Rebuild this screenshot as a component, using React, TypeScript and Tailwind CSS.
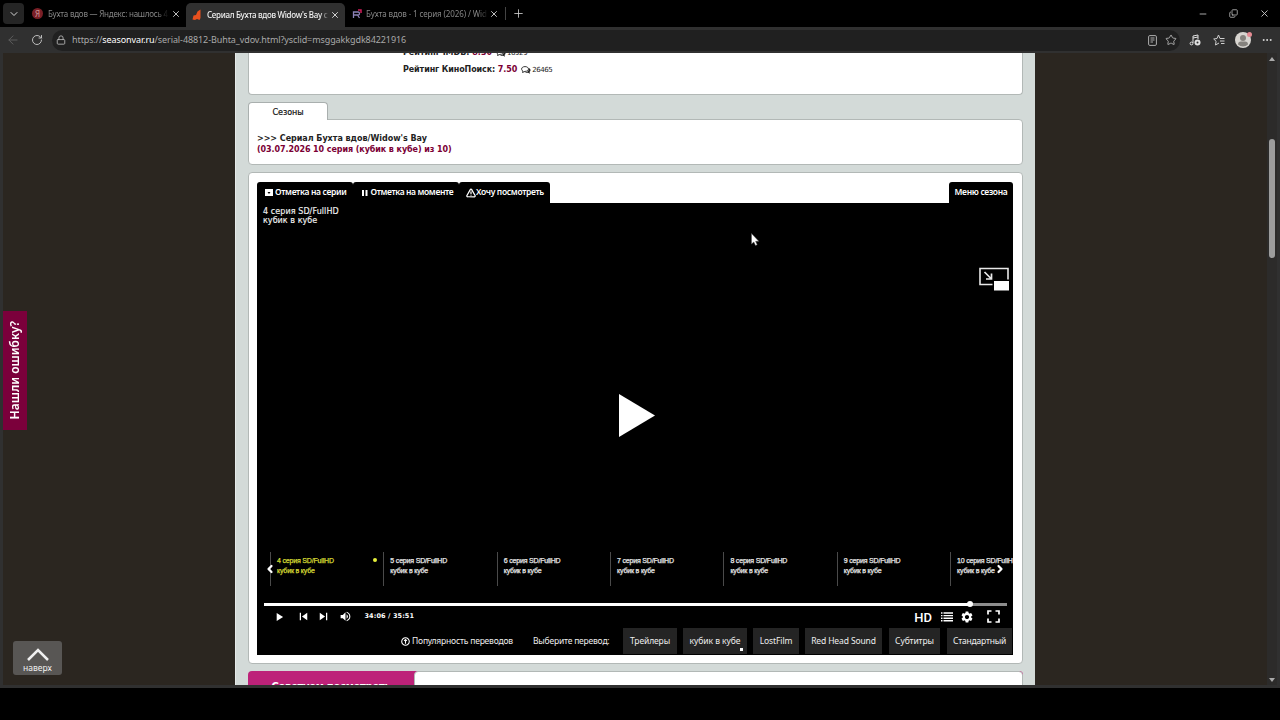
import React from 'react';
import {
    ArrowLeft, ChevronDown, ChevronLeft, ChevronRight, Copy,
    Lock, Minus, MoreHorizontal, Plus, RotateCw, Star, TriangleAlert, X,
} from 'lucide-react';
import { MdFullscreen, MdPlayArrow, MdSettings, MdSkipNext, MdSkipPrevious, MdVolumeUp } from 'react-icons/md';

const EPISODES = [4, 5, 6, 7, 8, 9, 10];

const TRANSLATIONS = [
    { name: 'Трейлеры', box: 'w-[54px] ml-[13px]', text: 'tracking-[-0.1px]' },
    { name: 'кубик в кубе', box: 'w-[64px] ml-[6px]', text: 'tracking-[-0.05px]', active: true },
    { name: 'LostFilm', box: 'w-[46px] ml-[6px]', text: 'tracking-[-0.1px]' },
    { name: 'Red Head Sound', box: 'w-[77px] ml-[6px]', text: 'tracking-[-0.12px]' },
    { name: 'Субтитры', box: 'w-[51px] ml-[7px]', text: 'tracking-[-0.1px]' },
    { name: 'Стандартный', box: 'w-[65px] ml-[7px]', text: 'tracking-[-0.2px]' },
];

const TabStrip: React.FC = () => (
    <div className="flex h-[27px] items-center bg-black text-[8px] text-[#858585]">
        <div className="ml-[3px] flex h-[21px] w-[21px] items-center justify-center rounded-[4px] bg-[#252525]">
            <ChevronDown className="h-[12px] w-[12px] text-[#d5d5d5]" />
        </div>
        <div className="ml-[8px] flex w-[154px] items-center">
            <div className="flex h-[11px] w-[11px] shrink-0 items-center justify-center rounded-full bg-[#7a1f26] text-[8px] text-[#c99]">Я</div>
            <span className="ml-[5px] w-[121px] whitespace-nowrap tracking-[-0.22px] [mask-image:linear-gradient(to_right,black_90%,transparent)]">Бухта вдов — Яндекс: нашлось 4</span>
            <X className="ml-[2px] h-[10px] w-[10px] shrink-0 text-[#e5e5e5]" />
        </div>
        <div className="flex h-[24px] w-[159px] items-center self-end rounded-t-[5px] bg-[#303030] pb-[1px] text-[#f0f0f0]">
            <svg viewBox="0 0 10 12" className="ml-[6px] h-[12px] w-[10px] shrink-0">
                <path d="M.500 10.500 1.500 6.500 4 6l1.500-3.500L8.500.500V9L7.500 11 5 10 3 11Z" fill="#e8501e" />
            </svg>
            <span className="ml-[5px] w-[122px] whitespace-nowrap font-medium tracking-[-0.3px] [mask-image:linear-gradient(to_right,black_93%,transparent)]">Сериал Бухта вдов Widow's Bay с</span>
            <X className="ml-[1px] h-[10px] w-[10px] shrink-0" />
        </div>
        <div className="ml-[7px] flex w-[147px] items-center">
            <svg viewBox="0 0 10 10" className="h-[10px] w-[10px] shrink-0">
                <path d="M1.5 9V3h4.500q1.500 0 1.500 1.500T6 6H2M5.500 6 7.500 9" fill="none" stroke="#8b81b5" strokeWidth="1.300" />
                <path d="M6 1h3v3" fill="none" stroke="#d01d58" strokeWidth="1.500" />
            </svg>
            <span className="ml-[4px] w-[122px] whitespace-nowrap tracking-[-0.12px] [mask-image:linear-gradient(to_right,black_92%,transparent)]">Бухта вдов - 1 серия (2026) / Wid</span>
            <X className="ml-[1px] h-[10px] w-[10px] shrink-0 text-[#e5e5e5]" />
        </div>
        <div className="ml-[6px] h-[13px] w-px bg-[#444]" />
        <Plus strokeWidth={1.5} className="ml-[6px] h-[13px] w-[13px] text-[#d5d5d5]" />
        <div className="ml-auto flex items-center text-[#c9c9c9]">
            <Minus className="h-[10px] w-[10px]" />
            <Copy className="ml-[21px] h-[9px] w-[9px] -scale-x-100 rotate-180" />
            <X className="ml-[21px] mr-[10px] h-[11px] w-[11px]" />
        </div>
    </div>
);

const AddressBar: React.FC = () => (
    <div className="flex h-[26px] items-center bg-[#303030] text-[#bdbdbd]">
        <ArrowLeft strokeWidth={1.7} className="ml-[6px] h-[14px] w-[14px] text-[#5c5c5c]" />
        <RotateCw className="ml-[11px] h-[12px] w-[12px]" />
        <div className="ml-[9px] flex h-[21px] w-[1128px] items-center rounded-full bg-[#202020]">
            <Lock className="ml-[4px] h-[10px] w-[10px]" />
            <span className="ml-[6px] whitespace-nowrap text-[9px] tracking-[-0.09px] text-[#a9a9a9]">
                https://<span className="text-white">seasonvar.ru</span>/serial-48812-Buhta_vdov.html?ysclid=msggakkgdk84221916
            </span>
            <svg viewBox="0 0 9 11" className="ml-auto h-[11px] w-[9px]" fill="none" stroke="currentColor" strokeWidth=".900">
                <rect x=".600" y=".600" width="7.800" height="9.800" rx="1.200" />
                <path d="M2.500 3h4M2.500 5h4M2.500 7h2.500" />
            </svg>
            <Star strokeWidth={1.7} className="ml-[8px] mr-[3px] h-[12px] w-[12px]" />
        </div>
        <svg viewBox="0 0 12 12" className="ml-[9px] h-[12px] w-[12px] text-[#e0e0e0]">
            <path d="M4 9V2l5-1v4M4 4l5-1" fill="none" stroke="currentColor" />
            <circle cx="2.500" cy="9.500" r="1.400" fill="none" stroke="currentColor" />
            <circle cx="8.500" cy="8.500" r="3" fill="currentColor" />
            <circle cx="8.500" cy="8.500" r="1" fill="#303030" />
        </svg>
        <svg viewBox="0 0 12 12" className="ml-[12px] h-[12px] w-[12px]" fill="none" stroke="#d0d0d0" strokeWidth="1">
            <path d="M7 4.500 5.500 1 4 4.500.700 5l2.400 2.300L2.500 11 6 9M7 4.500h4.500M7 7h4.500M8 9.500h3.500" />
        </svg>
        <div className="relative ml-[10px] h-[16px] w-[16px]">
            <svg viewBox="0 0 16 16" className="h-[16px] w-[16px]">
                <circle cx="8" cy="8" r="8" fill="#d8d5d0" />
                <circle cx="8" cy="6" r="3" fill="#85827d" />
                <path d="M3 12.500q0-3 3-3h4q3 0 3 3-2 2-5 2t-5-2Z" fill="#85827d" />
            </svg>
            <div className="absolute right-[-1px] top-0 h-[5px] w-[5px] rounded-full bg-[#e58b93]" />
        </div>
        <MoreHorizontal className="ml-[10px] h-[12px] w-[12px] text-[#e0e0e0]" />
    </div>
);

const Comments: React.FC<{ count: string }> = ({ count }) => (
    <>
        <svg viewBox="0 0 10 8" className="ml-[4px] h-[8px] w-[10px]">
            <path d="M4 .600c2 0 3.500 1 3.500 2.400S6 5.400 4 5.400L1.500 6.500 2 5C1 4.600.600 3.800.600 3 .600 1.600 2 .600 4 .600Z" fill="white" stroke="#222" strokeWidth=".900" />
            <path d="M8 2c2 1 2 3 .500 4l.700 1.800L7 6.800q-2 .200-3-.600 4 0 4-4.200Z" fill="#222" />
        </svg>
        <span className="ml-[1px] text-[7px] font-normal tracking-[-0.43px] text-[#222]">{count}</span>
    </>
);

const Seasons: React.FC = () => (
    <div className="mt-[7px]">
        <div className="relative mb-[-1px] h-[18px] w-[80px] rounded-t-[4px] border border-b-0 border-[#a9afae] bg-white pt-[4px] text-center font-['DejaVu_Sans',sans-serif] text-[8px] leading-[11px] tracking-[-0.02px] text-[#111] [-webkit-text-stroke:0.2px]">Сезоны</div>
        <div className="h-[46px] rounded-[4px] rounded-tl-none border border-[#b2b8b6] bg-white px-[8px] pt-[13px] font-['DejaVu_Sans',sans-serif] text-[8px] font-bold leading-[11px]">
            <div className="tracking-[-0.02px] text-[#222]">&gt;&gt;&gt; Сериал Бухта вдов/Widow's Bay</div>
            <div className="mt-[-0.5px] tracking-[-0.08px] text-[#7b0035]">(03.07.2026 10 серия (кубик в кубе) из 10)</div>
        </div>
    </div>
);

const PlayerTabs: React.FC = () => (
    <div className="flex h-[21px] text-[8.5px] font-semibold tracking-[-0.32px] text-white">
        <div className="flex w-[96px] items-center rounded-t-[3px] bg-black pl-[8px]">
            <svg viewBox="0 0 8 7" className="h-[7px] w-[8px]"><path d="M0 0h8v7H0Z" fill="white" /><path d="m2.500 3 1.500 2 1.500-2Z" fill="black" /></svg>
            <span className="ml-[2px] whitespace-nowrap">Отметка на серии</span>
        </div>
        <div className="flex w-[106px] items-center rounded-t-[3px] bg-black pl-[9px]">
            <svg viewBox="0 0 6 6" className="h-[6px] w-[6px]"><path d="M0 0h2v6H0ZM3.500 0h2v6h-2Z" fill="white" /></svg>
            <span className="ml-[2.5px] whitespace-nowrap tracking-[-0.37px]">Отметка на моменте</span>
        </div>
        <div className="flex w-[91px] items-center rounded-t-[3px] bg-black pl-[7px]">
            <TriangleAlert strokeWidth={3} className="h-[10px] w-[10px]" />
            <span className="whitespace-nowrap">Хочу посмотреть</span>
        </div>
        <div className="ml-auto flex w-[64px] items-center justify-center rounded-t-[3px] bg-black">
            <span className="whitespace-nowrap">Меню сезона</span>
        </div>
    </div>
);

const EpisodeStrip: React.FC = () => (
    <div className="relative h-[34px]">
        <div className="flex h-[34px] overflow-hidden pl-[13px]">
            {EPISODES.map((n, i) => (
                <div
                    key={n}
                    className={`flex w-[113.35px] shrink-0 justify-between border-l border-[#4a4a4a] pl-[6px] pt-[4px] font-['Liberation_Sans',sans-serif] text-[7px] leading-[10px] tracking-[-0.18px] [-webkit-text-stroke:0.25px] ${i === 0 ? 'text-[#d8dc35]' : 'text-[#e8e8e8]'}`}
                >
                    <div className="whitespace-nowrap">
                        <div>{n} серия SD/FullHD</div>
                        <div>кубик в кубе</div>
                    </div>
                    {i === 0 && <div className="mr-[6px] mt-[2px] h-[4px] w-[4px] rounded-full bg-[#e6f03a]" />}
                </div>
            ))}
        </div>
        <ChevronLeft strokeWidth={4.5} className="absolute left-[7px] top-[11px] h-[12px] w-[12px] text-white" />
        <ChevronRight strokeWidth={4.5} className="absolute right-[7px] top-[11px] h-[12px] w-[12px] text-white" />
    </div>
);

const Controls: React.FC = () => (
    <div className="flex h-[22px] items-center pb-[1px] text-white">
        <MdPlayArrow className="ml-[15px] h-[14px] w-[14px]" />
        <MdSkipPrevious className="ml-[9.5px] h-[15px] w-[15px]" />
        <MdSkipNext className="ml-[5px] h-[15px] w-[15px]" />
        <MdVolumeUp className="ml-[8px] h-[13px] w-[13px]" />
        <span className="ml-[13px] whitespace-pre font-['DejaVu_Sans',sans-serif] text-[6.5px] font-bold tracking-[0.1px]">34:06 / 35:51</span>
        <span className="ml-auto pt-[1px] font-[Roboto,sans-serif] text-[13px] font-medium leading-none">HD</span>
        <svg viewBox="0 0 12 10" className="ml-[9px] h-[10px] w-[12px]" stroke="white" strokeWidth="1.400">
            <path d="M0 1h1.500M2.500 1H12M0 3.600h1.500M2.500 3.600H12M0 6.200h1.500M2.500 6.200H12M0 8.800h1.500M2.500 8.800H12" />
        </svg>
        <MdSettings className="ml-[7px] h-[14px] w-[14px]" />
        {/* fullscreen corners */}
        <svg viewBox="0 0 13 13" className="ml-[13px] mr-[13px] h-[13px] w-[13px]" fill="none" stroke="white" strokeWidth="1.700">
            <path d="M1 4.500V1h3.500M8.500 1H12v3.500M12 8.500V12H8.500M4.500 12H1V8.500" />
        </svg>
    </div>
);

const Player: React.FC = () => (
    <div className="relative flex h-[452px] flex-col bg-black">
        <div className="pl-[6px] pt-[4px] font-['DejaVu_Sans',sans-serif] text-[8px] leading-[9px] text-[#f2f2f2] [-webkit-text-stroke:0.15px]">
            <div className="tracking-[0.08px]">4 серия SD/FullHD</div>
            <div className="tracking-[0.04px]">кубик в кубе</div>
        </div>
        <svg viewBox="0 0 32 24" className="absolute right-[3px] top-[64px] h-[24px] w-[32px]">
            <path d="M14.500 17.500H2V1.500h28V12.500" fill="none" stroke="#e8e8e8" strokeWidth="1.600" />
            <path d="m6.500 5 7 7M13.500 6.500V12H8" fill="none" stroke="#e8e8e8" strokeWidth="1.700" />
            <path d="M16 14h15v9.500H16Z" fill="white" />
        </svg>
        <svg viewBox="0 0 36 43" className="absolute left-[362px] top-[191px] h-[43px] w-[36px]"><path d="M0 0v43l36-21.500Z" fill="white" /></svg>
        <svg viewBox="0 0 9 13" className="absolute left-[493.5px] top-[29.5px] h-[13px] w-[9px]"><path d="M.500.500v10.500l2.300-2 1.700 3.500 1.700-.800L4.600 8.300h3.200Z" fill="white" stroke="#555" strokeWidth=".500" /></svg>
        <div className="mt-auto"><EpisodeStrip /></div>
        <div className="relative mx-[6.5px] mt-[17px] h-[3px] bg-[#8c8c8c]">
            <div className="h-[3px] w-[706px] bg-white" />
            <div className="absolute left-[703px] top-[-2px] h-[6px] w-[6px] rounded-full bg-white" />
        </div>
        <Controls />
        <div className="flex h-[27px] items-start text-[8.5px] text-[#eee]">
            <svg viewBox="0 0 10 10" className="ml-[144px] mt-[9px] h-[9px] w-[9px]" fill="none" stroke="white" strokeWidth="1.200">
                <circle cx="5" cy="5" r="4.200" /><path d="M5 7.500V3M3.500 4.300 5 2.700l1.500 1.600" />
            </svg>
            <span className="ml-[2px] w-[101px] whitespace-nowrap leading-[26px] tracking-[-0.19px]">Популярность переводов</span>
            <span className="ml-[20px] w-[77px] whitespace-nowrap leading-[26px] tracking-[-0.2px]">Выберите перевод:</span>
            {TRANSLATIONS.map((t) => (
                <div key={t.name} className={`relative h-[26px] shrink-0 whitespace-nowrap bg-[#242424] text-center leading-[26px] ${t.box} ${t.text}`}>
                    {t.name}
                    {t.active && <div className="absolute bottom-[3px] right-[4px] h-[3px] w-[3px] bg-white" />}
                </div>
            ))}
        </div>
    </div>
);

const App: React.FC = () => (
    <div className="h-[720px] w-[1280px] overflow-hidden bg-black font-['Noto_Sans',sans-serif]">
        <TabStrip />
        <AddressBar />
        <div className="flex h-[635px] border-b-[3px] border-l-[3px] border-r-[3px] border-[#303030] bg-[#2b2620]">
            <div className="flex w-[232px] flex-col justify-between pb-[10px]">
                <div className="mt-[258px] flex h-[119px] w-[24px] items-center justify-center bg-[#7b003b]">
                    <span className="rotate-180 whitespace-nowrap text-[12px] font-semibold text-white [writing-mode:vertical-rl]">Нашли ошибку?</span>
                </div>
                <div className="ml-[10px] flex h-[34px] w-[49px] flex-col items-center rounded-[3px] bg-[#585654] text-[#f0f0f0]">
                    <svg viewBox="0 0 22 13" className="mt-[7px] h-[13px] w-[22px] shrink-0" fill="none" stroke="currentColor" strokeWidth="2.500">
                        <path d="m1 12 10-10 10 10" />
                    </svg>
                    <span className="mt-[2px] text-[8.5px] leading-[10px]">наверх</span>
                </div>
            </div>
            <div className="h-[632px] w-[800px] shrink-0 overflow-hidden border-l border-[#e5e9e8] bg-[#d3dad8] pl-[12px] pr-[12px]">
                <div className="flex h-[42px] flex-col overflow-hidden rounded-b-[4px] border border-t-0 border-[#b2b8b6] bg-white pl-[154px] font-['DejaVu_Sans',sans-serif] text-[8px] font-bold leading-[10px] text-[#222]">
                    <div className="mt-[-5px] flex items-center whitespace-pre">Рейтинг IMDB: <span className="text-[#7b0035]">8.30</span><Comments count="16929" /></div>
                    <div className="mt-[7px] flex items-center whitespace-pre tracking-[-0.1px]">Рейтинг КиноПоиск: <span className="text-[#7b0035]">7.50</span><Comments count="26465" /></div>
                </div>
                <Seasons />
                <div className="mt-[7px] h-[492px] rounded-[4px] border border-[#b2b8b6] bg-white pl-[8px] pr-[9px] pt-[9px]">
                    <PlayerTabs />
                    <Player />
                </div>
                <div className="mt-[7px] flex h-[40px] overflow-hidden rounded-[4px] bg-[#bd2279]">
                    <div className="w-[166px] shrink-0 pt-[9px] text-center font-['DejaVu_Sans',sans-serif] text-[10px] font-bold leading-[14px] tracking-[-0.3px] text-white">Советуем посмотреть</div>
                    <div className="grow rounded-[4px] border border-[#b2b8b6] bg-white" />
                </div>
            </div>
            <div className="ml-auto flex w-[10px] flex-col items-center bg-[#2c2b2a]">
                <div className="mt-[4px] h-0 w-0 border-x-[3px] border-b-[4px] border-x-transparent border-b-[#aaa]" />
                <div className="mt-[78px] h-[119px] w-[6px] rounded-full bg-[#9d9d9d]" />
                <div className="mb-[3px] mt-auto h-0 w-0 border-x-[3px] border-t-[4px] border-x-transparent border-t-[#aaa]" />
            </div>
        </div>
    </div>
);

export default App;
